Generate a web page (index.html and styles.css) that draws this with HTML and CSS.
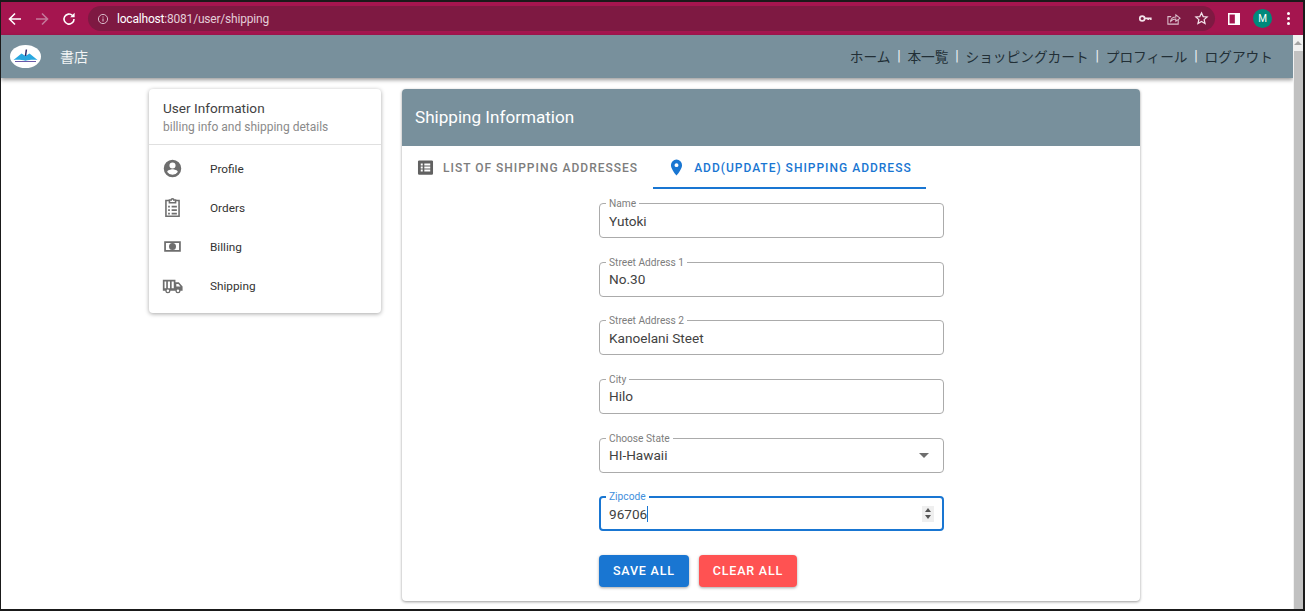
FILE: index.html
```html
<!DOCTYPE html>
<html lang="ja">
<head>
    <meta charset="UTF-8">
    <meta name="viewport" content="width=device-width, initial-scale=1.0">
    <title>Shipping</title>
    <link rel="stylesheet" href="styles.css">
</head>
<body>

<div class="frame">
    <div class="browser-bar">
        <svg class="nav-icon" viewBox="0 0 16 16"><path d="M14 8H3M8 2.500 2.500 8 8 13.500" fill="none" stroke="#fff" stroke-width="1.600"/></svg>
        <svg class="nav-icon" viewBox="0 0 16 16"><path d="M2 8h11M8 2.500 13.500 8 8 13.500" fill="none" stroke="#c4789a" stroke-width="1.600"/></svg>
        <svg class="nav-icon" viewBox="0 0 16 16"><path d="M13 8a5 5 0 1 1-1.500-3.500" fill="none" stroke="#fff" stroke-width="1.600"/><path d="M13.600 1.800v4.400H9.200z" fill="#fff"/></svg>
        <div class="address">
            <svg class="info-icon" viewBox="0 0 12 12"><circle cx="6" cy="6" r="4.600" fill="none" stroke="#d9b9c8" stroke-width="1"/><path d="M6 5.400v3M6 3.400v1.100" stroke="#d9b9c8" stroke-width="1.100"/></svg>
            <span class="url"><b>localhost</b>:8081/user/shipping</span>
            <span class="spacer"></span>
            <svg class="addr-icon" viewBox="0 0 16 16"><circle cx="4.500" cy="8" r="2.600" fill="none" stroke="#f3e3ea" stroke-width="1.800"/><path d="M7 7h7.500v2.600h-1.600V8.800h-1v.8H10V8.800H7z" fill="#f3e3ea"/></svg>
            <svg class="addr-icon" viewBox="0 0 16 16"><path d="M13 9.500V14H2V6h3.500" fill="none" stroke="#dcc0cd" stroke-width="1.100"/><path d="M5 11c.3-3 2.500-4.500 5.500-4.500V4L15 7.600l-4.500 3.400V8.600C8.500 8.600 6.500 9.300 5 11z" fill="none" stroke="#dcc0cd" stroke-width="1.100"/></svg>
            <svg class="addr-icon" viewBox="0 0 16 16"><path d="M8 2l1.800 4 4.200.4-3.200 2.800 1 4.200L8 11.200l-3.800 2.200 1-4.200L2 6.400 6.200 6z" fill="none" stroke="#f3e3ea" stroke-width="1.300"/></svg>
        </div>
        <svg class="panel-icon" viewBox="0 0 14 14"><rect x="0.900" y="0.900" width="12.200" height="12.200" fill="none" stroke="#fff" stroke-width="1.800"/><rect x="8" y="1" width="5" height="12" fill="#fff"/></svg>
        <span class="avatar">M</span>
        <span class="kebab"><i></i><i></i><i></i></span>
    </div>

    <div class="viewport">
        <div class="content">
            <header class="app-bar">
                <svg class="logo" viewBox="0 0 32 23">
                    <ellipse cx="15.500" cy="11.500" rx="15.500" ry="11.500" fill="#fff"/>
                    <path d="M3.500 15 11.500 8.500l4 2.500 4-2.500 8 6.500c-4-.6-8.500-.3-12 .8-3.500-1.100-8-1.400-12-.8z" fill="#29a8e0"/>
                    <path d="M5 16.500h21" stroke="#6a5aa8" stroke-width="1"/>
                    <path d="M16.400 4.500 15.500 11" stroke="#2c2a6b" stroke-width="1.500"/>
                </svg>
                <span class="brand">書店</span>
                <nav class="app-nav">
                    <a>ホーム</a><span class="sep">|</span>
                    <a>本一覧</a><span class="sep">|</span>
                    <a>ショッピングカート</a><span class="sep">|</span>
                    <a>プロフィール</a><span class="sep">|</span>
                    <a>ログアウト</a>
                </nav>
            </header>

            <div class="page">
                <aside class="side-card">
                    <div class="side-head">
                        <div class="side-title">User Information</div>
                        <div class="side-sub">billing info and shipping details</div>
                    </div>
                    <ul class="side-list">
                        <li>
                            <svg class="side-icon" viewBox="0 0 24 24"><path d="M12 2a10 10 0 1 0 0 20 10 10 0 0 0 0-20zm0 3a3.500 3.500 0 1 1 0 7 3.500 3.500 0 0 1 0-7zm0 14.200a7.200 7.200 0 0 1-6-3.200c0-2 4-3.100 6-3.100s6 1.100 6 3.100a7.200 7.200 0 0 1-6 3.200z"/></svg>
                            Profile
                        </li>
                        <li>
                            <svg class="side-icon" viewBox="0 0 24 24"><path class="outline" d="M8 4H4.500v18h15V4H16M8.500 6.500V3.500h2a1.500 1.500 0 0 1 3 0h2v3zM11 11h6M11 15h6M11 19h6M7 11h2M7 15h2M7 19h2"/></svg>
                            Orders
                        </li>
                        <li>
                            <svg class="side-icon" viewBox="0 0 24 24"><path d="M2.500 6h19v12h-19zm2 2v8h15V8zm7.500 0a4 4 0 1 1 0 8 4 4 0 0 1 0-8z" fill-rule="evenodd"/></svg>
                            Billing
                        </li>
                        <li>
                            <svg class="side-icon" viewBox="-1 -0.500 25 25"><path d="M0 4h15v3h4l4.500 5v5H21a3 3 0 0 1-6 0H9a3 3 0 0 1-6 0H0zm2 2v8h2V6zm4 0v8h2.500V6zm4.500 0v8H13V6zm5.500 3v3h5l-2.500-3zM6 15.500a1.500 1.500 0 1 0 0 3 1.500 1.500 0 0 0 0-3zm12 0a1.500 1.500 0 1 0 0 3 1.500 1.500 0 0 0 0-3z" fill-rule="evenodd"/></svg>
                            Shipping
                        </li>
                    </ul>
                </aside>

                <main class="main-card">
                    <div class="main-head">Shipping Information</div>
                    <div class="tabs">
                        <div class="tab">
                            <svg class="tab-icon" viewBox="0 0 24 24"><path d="M4 3h16a1.500 1.500 0 0 1 1.500 1.500v15A1.500 1.500 0 0 1 20 21H4a1.500 1.500 0 0 1-1.500-1.500v-15A1.500 1.500 0 0 1 4 3zm2 4v2.500h2.500V7zm4.500 0v2.500H18V7zM6 10.750v2.500h2.500v-2.500zm4.500 0v2.500H18v-2.500zM6 14.500V17h2.500v-2.500zm4.500 0V17H18v-2.500z" fill-rule="evenodd"/></svg>
                            LIST OF SHIPPING ADDRESSES
                        </div>
                        <div class="tab tab-active">
                            <svg class="tab-icon" viewBox="0 0 24 24"><path d="M12 2a7 7 0 0 0-7 7c0 5.250 7 13 7 13s7-7.750 7-13a7 7 0 0 0-7-7zm0 9.500a2.500 2.500 0 1 1 0-5 2.500 2.500 0 0 1 0 5z"/></svg>
                            ADD(UPDATE) SHIPPING ADDRESS
                        </div>
                    </div>

                    <form class="ship-form">
                        <div class="field"><span class="field-label">Name</span><span class="field-value">Yutoki</span></div>
                        <div class="field"><span class="field-label">Street Address 1</span><span class="field-value">No.30</span></div>
                        <div class="field"><span class="field-label">Street Address 2</span><span class="field-value">Kanoelani Steet</span></div>
                        <div class="field"><span class="field-label">City</span><span class="field-value">Hilo</span></div>
                        <div class="field">
                            <span class="field-label">Choose State</span><span class="field-value">HI-Hawaii</span>
                            <span class="select-arrow"></span>
                        </div>
                        <div class="field field-focus">
                            <span class="field-label">Zipcode</span><span class="field-value">96706<span class="caret"></span></span>
                            <span class="spinner"><i class="up"></i><i class="down"></i></span>
                        </div>
                        <div class="form-buttons">
                            <button type="button" class="btn btn-save">SAVE ALL</button>
                            <button type="button" class="btn btn-clear">CLEAR ALL</button>
                        </div>
                    </form>
                </main>
            </div>
        </div>

        <div class="scrollbar">
            <div class="scroll-btn"><span class="scroll-arrow"></span></div>
            <div class="scroll-thumb"></div>
        </div>
    </div>
</div>

</body>
</html>
```

FILE: styles.css
```css
* {
    box-sizing: border-box;
}
body {
    margin: 0;
    font-family: 'Roboto', 'Noto Sans CJK JP', sans-serif;
    background-color: #ffffff;
}
.frame {
    width: 1305px;
    height: 611px;
    display: flex;
    flex-direction: column;
    overflow: hidden;
    border: 1px solid #1a1a1a;
    border-width: 2px 2px 2px 1px;
    background-color: #ffffff;
}

/* browser chrome */
.browser-bar {
    height: 33px;
    flex-shrink: 0;
    display: flex;
    align-items: center;
    padding-left: 6px;
    background-color: #a5154f;
}
.nav-icon {
    width: 16px;
    height: 16px;
    margin-right: 11px;
    flex-shrink: 0;
}
.address {
    width: 1127px;
    height: 25px;
    display: flex;
    align-items: center;
    padding: 0 6px 0 9px;
    border-radius: 13px;
    background-color: #7e1942;
    color: #e3cdd7;
    font-size: 12px;
    letter-spacing: -0.200px;
}
.info-icon {
    width: 12px;
    height: 12px;
    margin-right: 8px;
}
.url b {
    font-weight: 400;
    color: #ffffff;
}
.spacer {
    flex: 1;
}
.addr-icon {
    width: 15px;
    height: 15px;
    margin-left: 13px;
}
.panel-icon {
    width: 12px;
    height: 12px;
    margin-left: 13px;
}
.avatar {
    width: 19px;
    height: 19px;
    margin-left: 13px;
    border-radius: 50%;
    background-color: #00897b;
    color: #ffffff;
    font-size: 10px;
    line-height: 19px;
    text-align: center;
}
.kebab {
    margin-left: 15px;
    display: flex;
    flex-direction: column;
    gap: 2px;
}
.kebab i {
    width: 3px;
    height: 3px;
    border-radius: 50%;
    background-color: #ffffff;
}

.viewport {
    flex: 1;
    min-height: 0;
    display: flex;
}
.content {
    width: 1292px;
}
.scrollbar {
    width: 10px;
    display: flex;
    flex-direction: column;
    background-color: #f1f1f1;
}
.scroll-btn {
    height: 16px;
    display: flex;
    justify-content: center;
    padding-top: 6px;
}
.scroll-arrow {
    height: 0;
    border-left: 4px solid transparent;
    border-right: 4px solid transparent;
    border-bottom: 4px solid #a3a3a3;
}
.scroll-thumb {
    flex: 1;
    margin-left: 1px;
    background-color: #c1c1c1;
}

/* app bar */
.app-bar {
    height: 43px;
    display: flex;
    align-items: center;
    padding: 0 20px 0 9px;
    background-color: #78909c;
    box-shadow: 0 2px 4px rgba(0, 0, 0, 0.4);
}
.logo {
    width: 32px;
    height: 23px;
}
.brand {
    margin: 0 0 2px 18px;
    font-size: 14px;
    color: #f2f4f5;
}
.app-nav {
    margin: 0 0 1px auto;
    display: flex;
    align-items: center;
    font-size: 13.700px;
    color: #222f36;
}
.sep {
    width: 17px;
    text-align: center;
    font-size: 14px;
    color: #eef2f4;
}

/* page */
.page {
    display: flex;
    align-items: flex-start;
    gap: 21px;
    padding: 11px 0 0 148px;
}
.side-card {
    width: 232px;
    border-radius: 4px;
    background-color: #ffffff;
    box-shadow: 0 1px 4px rgba(0, 0, 0, 0.35);
}
.side-head {
    height: 56px;
    padding: 11px 14px 0;
    border-bottom: 1px solid #e0e0e0;
}
.side-title {
    font-size: 13.600px;
    line-height: 17px;
    color: #424242;
}
.side-sub {
    margin-top: 3px;
    font-size: 12px;
    line-height: 15px;
    color: #8a8a8a;
}
.side-list {
    list-style: none;
    margin: 0;
    padding: 4px 0 7px;
}
.side-list li {
    height: 39.200px;
    display: flex;
    align-items: center;
    padding-left: 13px;
    font-size: 11.800px;
    color: #333333;
}
.side-icon {
    width: 21px;
    height: 21px;
    margin-right: 27px;
    fill: #6e6e6e;
}
.side-icon .outline {
    fill: none;
    stroke: #6e6e6e;
    stroke-width: 1.800;
}
.main-card {
    width: 738px;
    height: 512px;
    border-radius: 4px;
    background-color: #ffffff;
    box-shadow: 0 1px 3px rgba(0, 0, 0, 0.4);
}
.main-head {
    height: 57px;
    display: flex;
    align-items: center;
    padding: 0 0 1px 13px;
    border-radius: 4px 4px 0 0;
    background-color: #78909c;
    color: #ffffff;
    font-size: 17.100px;
}
.tabs {
    height: 43px;
    display: flex;
}
.tab {
    display: flex;
    align-items: center;
    gap: 8px;
    padding: 0 15px 0 14px;
    white-space: nowrap;
    font-size: 12px;
    font-weight: 500;
    letter-spacing: 1px;
    color: #7d7d7d;
}
.tab-active {
    width: 273px;
    padding-top: 2px;
    border-bottom: 2px solid #1976d2;
    color: #1976d2;
}
.tab-icon {
    width: 19px;
    height: 19px;
    flex-shrink: 0;
    fill: currentColor;
}
.tab:first-child .tab-icon {
    fill: #616161;
}

/* form */
.ship-form {
    width: 345px;
    margin: 14.200px 0 0 197px;
    display: flex;
    flex-direction: column;
    gap: 23.600px;
}
.field {
    height: 35px;
    display: flex;
    align-items: center;
    padding: 0 9px;
    position: relative;
    border: 1px solid #ababab;
    border-radius: 4px;
    font-size: 13.600px;
    color: #424242;
}
.field-label {
    position: absolute;
    left: 6px;
    top: -6px;
    padding: 0 3px;
    background-color: #ffffff;
    font-size: 10.200px;
    line-height: 12px;
    color: #7d7d7d;
}
.field-focus {
    border: 2px solid #1976d2;
    padding: 0 8px;
}
.field-focus .field-label {
    left: 5px;
    top: -7px;
    color: #3f8fdc;
}
.caret {
    display: inline-block;
    width: 1px;
    height: 16px;
    vertical-align: -3px;
    background-color: #1976d2;
}
.select-arrow {
    margin-left: auto;
    margin-right: 5px;
    border-left: 5px solid transparent;
    border-right: 5px solid transparent;
    border-top: 5px solid #6e6e6e;
}
.spinner {
    width: 12px;
    height: 16px;
    margin-left: auto;
    display: flex;
    flex-direction: column;
    align-items: center;
    justify-content: center;
    gap: 3px;
    background-color: #efefef;
}
.spinner i {
    border-left: 3px solid transparent;
    border-right: 3px solid transparent;
}
.spinner .up {
    border-bottom: 4px solid #555555;
}
.spinner .down {
    border-top: 4px solid #555555;
}
.form-buttons {
    display: flex;
    gap: 10px;
}
.btn {
    height: 32px;
    padding: 0 14px;
    border: none;
    border-radius: 4px;
    color: #ffffff;
    font-family: inherit;
    font-size: 12.500px;
    font-weight: 500;
    letter-spacing: 0.800px;
    box-shadow: 0 1px 3px rgba(0, 0, 0, 0.35);
}
.btn-save {
    background-color: #1976d2;
}
.btn-clear {
    background-color: #ff5252;
}
```
